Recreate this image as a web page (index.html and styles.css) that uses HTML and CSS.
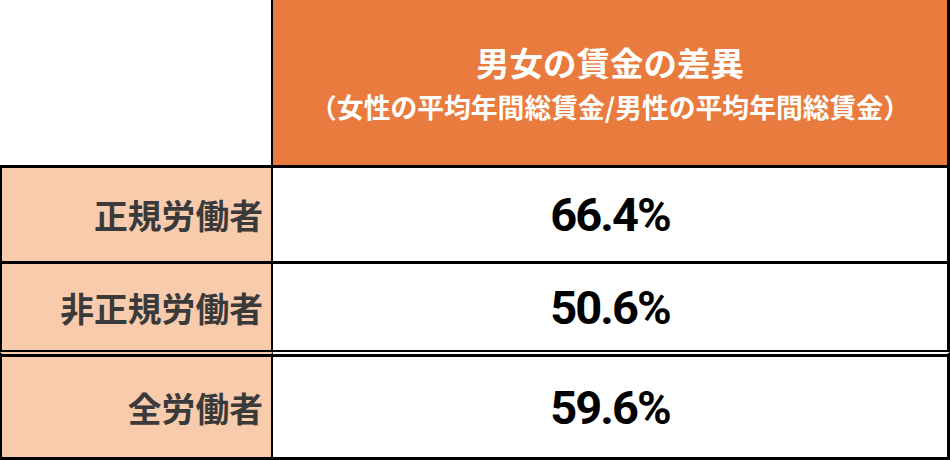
FILE: index.html
```html
<!DOCTYPE html>
<html lang="ja">
<head>
<meta charset="utf-8">
<title>男女の賃金の差異</title>
<link rel="stylesheet" href="styles.css">
</head>
<body>
<div class="table">
  <div class="cell corner"></div>
  <div class="cell head">
    <div class="title">男女の賃金の差異</div>
    <div class="subtitle">（女性の平均年間総賃金/男性の平均年間総賃金）</div>
  </div>

  <div class="cell label">正規労働者</div>
  <div class="cell value">66.4%</div>

  <div class="cell label before-double">非正規労働者</div>
  <div class="cell value before-double">50.6%</div>

  <div class="cell label after-double">全労働者</div>
  <div class="cell value after-double">59.6%</div>
</div>
</body>
</html>
```

FILE: styles.css
```css
html, body {
  margin: 0;
  padding: 0;
  background: #ffffff;
}

.table {
  width: 950px;
  height: 460px;
  display: grid;
  grid-template-columns: 273px 677px;
  grid-template-rows: 168px 96px 88px 108px;
  font-family: "Noto Sans CJK JP", "Noto Sans", sans-serif;
}

.cell {
  box-sizing: border-box;
  border-bottom: 3px solid #000;
}

.corner {
  background: #ffffff;
  border-right: 2px solid #000;
}

.head {
  background: #e97b3e;
  border-right: 3px solid #000;
  color: #ffffff;
  font-weight: 700;
  display: flex;
  flex-direction: column;
  align-items: center;
  justify-content: center;
  padding-top: 2px;
}

.title {
  font-size: 33.5px;
  line-height: 40px;
}

.subtitle {
  font-size: 26.8px;
  line-height: 36px;
  margin-top: 7px;
}

.label {
  background: #f8cbad;
  border-left: 2px solid #000;
  border-right: 2px solid #000;
  color: #3a3a3a;
  font-size: 33.8px;
  font-weight: 700;
  display: flex;
  align-items: center;
  justify-content: flex-end;
  padding-right: 8px;
}

.value {
  background: #ffffff;
  border-right: 3px solid #000;
  color: #000;
  font-family: Roboto, "Liberation Sans", sans-serif;
  font-size: 47px;
  font-weight: 700;
  letter-spacing: -2px;
  display: flex;
  align-items: center;
  justify-content: center;
}

.before-double {
  border-bottom: 2px solid #000;
}

.after-double {
  border-top: 2px solid transparent;
  box-shadow: inset 0 3px 0 #000;
  padding-top: 3px;
}
```
